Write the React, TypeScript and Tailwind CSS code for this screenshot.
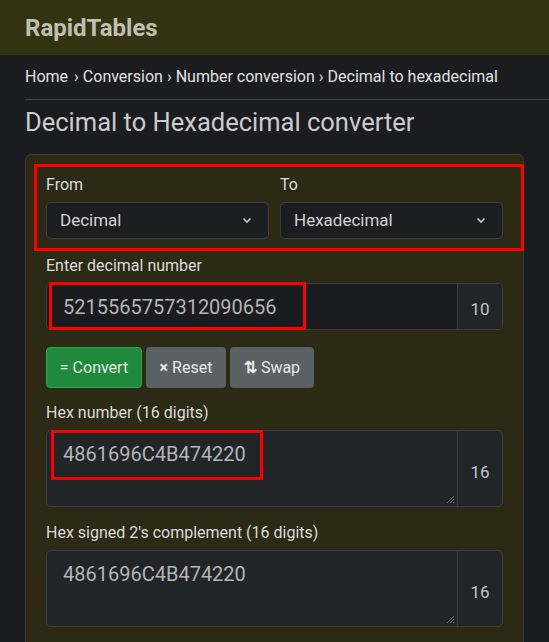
import React from "react";

const Chevron = () => (
  <svg width="10" height="7" viewBox="0 0 10 7" className="shrink-0">
    <polyline points="1.5,1.5 5,5 8.5,1.5" fill="none" stroke="#c8c8c8" strokeWidth="1.6" />
  </svg>
);

const FakeSelect = ({ value }: { value: string }) => (
  <div className="flex h-[37px] items-center justify-between rounded-[5px] border border-[#3c3d40] bg-[#1c1d20] pl-[13px] pr-[16px] text-[17px] text-[#d2d2d2]">
    <span>{value}</span>
    <Chevron />
  </div>
);

const Grip = () => (
  <svg width="10" height="10" viewBox="0 0 10 10" className="absolute bottom-[2px] right-[2px]">
    <line x1="9" y1="2" x2="2" y2="9" stroke="#6a6a6a" strokeWidth="1" />
    <line x1="9" y1="5" x2="5" y2="9" stroke="#6a6a6a" strokeWidth="1" />
    <line x1="9" y1="8" x2="8" y2="9" stroke="#6a6a6a" strokeWidth="1" />
  </svg>
);

const OutputBox = ({ value, marked }: { value: string; marked?: boolean }) => (
  <div className="relative flex h-[77px] rounded-[5px] border border-[#3c3d40] bg-[#212528]">
    <div className="relative flex-1 pl-[16px] pt-[8px] text-[20px] text-[#b4b4b4]">
      {value}
      <Grip />
    </div>
    <div className="flex w-[45px] items-center justify-center border-l border-[#3c3d40] pt-[9px] text-[17px] text-[#c4c4c4]">
      16
    </div>
    {marked && (
      <div className="absolute left-[4px] top-[-1px] h-[50px] w-[212px] border-[3px] border-[#ff0000]" />
    )}
  </div>
);

export default function App() {
  return (
    <div className="min-h-screen overflow-hidden bg-[#1b1c1f] font-['Roboto',sans-serif] text-[#dcdcdc]">
      <header className="flex h-[55px] items-center bg-[#333311] px-[25px]">
        <span className="text-[24px] font-bold text-[#c0c0b2]">RapidTables</span>
      </header>

      <div className="px-[25px]">
        <nav className="mr-[-25px] flex h-[45px] items-center border-b border-[#444548] text-[16px] text-[#e2e2e2]">
          <span>Home</span>
          <span className="ml-[6px]">› Conversion</span>
          <span className="ml-[4px]">› Number conversion</span>
          <span className="ml-[4px]">› Decimal to hexadecimal</span>
        </nav>

        <h1 className="mt-[6px] text-[25.5px] leading-[32px] text-[#cccccc]">
          Decimal to Hexadecimal converter
        </h1>

        <div className="relative mt-[16px] rounded-[6px] border border-[#3a3a36] bg-[#2c2914] px-[20px] pb-[20px] pt-[18px]">
          <div className="absolute left-[8px] top-[9px] h-[87px] w-[490px] border-[3px] border-[#ff0000]" />

          <div className="grid grid-cols-2 gap-x-[11px]">
            <div>
              <div className="mb-[5px] text-[16px] leading-[24px]">From</div>
              <FakeSelect value="Decimal" />
            </div>
            <div>
              <div className="mb-[5px] text-[16px] leading-[24px]">To</div>
              <FakeSelect value="Hexadecimal" />
            </div>
          </div>

          <div className="mt-[15px] mb-[5px] text-[16px] leading-[24px]">Enter decimal number</div>
          <div className="relative flex h-[47px] rounded-[5px] border border-[#3c3d40] bg-[#1a1b1e]">
            <div className="flex flex-1 items-center pl-[16px] text-[20px] text-[#b4b4b4]">
              5215565757312090656
            </div>
            <div className="flex w-[45px] items-center justify-center rounded-r-[5px] border-l border-[#3c3d40] bg-[#212528] pt-[7px] text-[17px] text-[#c4c4c4]">
              10
            </div>
            <div className="absolute left-[2px] top-[-2px] h-[48px] w-[257px] border-[3px] border-[#ff0000]" />
          </div>

          <div className="mt-[17px] flex gap-[4px] text-[16px] text-[#e8e8e8]">
            <button className="h-[41px] w-[96px] rounded-[4px] border border-[#28a745] bg-[#1f8a3b]">= Convert</button>
            <button className="h-[41px] w-[80px] rounded-[4px] bg-[#5a6064]">
              <span className="font-bold">×</span> Reset
            </button>
            <button className="h-[41px] w-[84px] rounded-[4px] bg-[#5a6064]">
              <span className="font-bold">⇅</span> Swap
            </button>
          </div>

          <div className="mt-[13px] mb-[5px] text-[16px] leading-[24px]">Hex number (16 digits)</div>
          <OutputBox value="4861696C4B474220" marked />

          <div className="mt-[14px] mb-[5px] text-[16px] leading-[24px]">Hex signed 2's complement (16 digits)</div>
          <OutputBox value="4861696C4B474220" />
        </div>
      </div>
    </div>
  );
}
